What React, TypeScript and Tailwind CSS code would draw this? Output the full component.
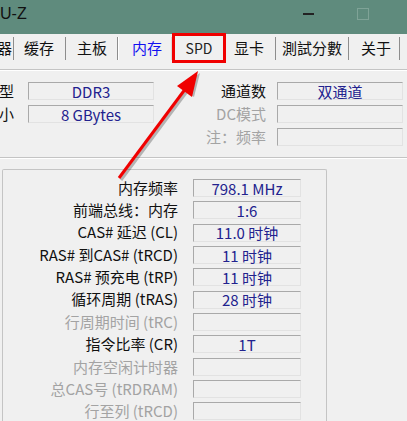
import React from "react";

type Row = { label: string; value?: string; dis?: boolean };

const rows: Row[] = [
  { label: "内存频率", value: "798.1 MHz" },
  { label: "前端总线：内存", value: "1:6" },
  { label: "CAS# 延迟 (CL)", value: "11.0 时钟" },
  { label: "RAS# 到CAS# (tRCD)", value: "11 时钟" },
  { label: "RAS# 预充电 (tRP)", value: "11 时钟" },
  { label: "循环周期 (tRAS)", value: "28 时钟" },
  { label: "行周期时间 (tRC)", dis: true },
  { label: "指令比率 (CR)", value: "1T" },
  { label: "内存空闲计时器", dis: true },
  { label: "总CAS号 (tRDRAM)", dis: true },
  { label: "行至列 (tRCD)", dis: true },
];

function Box({ value, className }: { value?: string; className: string }) {
  return (
    <div
      className={
        "h-[18px] shrink-0 flex items-center justify-center border border-t-[#a9a9a9] border-l-[#a9a9a9] border-b-[#e2e2e2] border-r-[#e2e2e2] bg-[#f0f0f0] text-[#22228e] leading-none whitespace-nowrap " +
        className
      }
    >
      {value}
    </div>
  );
}

function Tab({
  label,
  w,
  pl,
  active,
  blue,
}: {
  label: string;
  w: string;
  pl: string;
  active?: boolean;
  blue?: boolean;
}) {
  return (
    <div
      className={
        "shrink-0 flex items-center h-full whitespace-nowrap " +
        w +
        " " +
        pl +
        (active
          ? " border-l border-l-white border-r border-r-[#d8d8d8]"
          : " border-r border-r-[#8d8d8d]") +
        (blue ? " text-[#1010f0]" : " text-[#111]")
      }
    >
      {label}
    </div>
  );
}

export default function App() {
  return (
    <div className="relative w-[407px] h-[421px] overflow-hidden bg-[#f0f0f0] font-['Noto_Sans_CJK_SC','Noto_Sans',sans-serif] text-[15px] text-[#111] flex flex-col">
      {/* Title bar */}
      <div className="h-[34px] shrink-0 bg-[#5f8b7d] flex items-center">
        <div className="w-[285px] shrink-0 whitespace-nowrap text-[16px] text-[#111] -mt-[6px] font-['Liberation_Sans','Noto_Sans',sans-serif]">
          U-Z
        </div>
        <div className="shrink-0 w-[46px] h-full flex items-center justify-center -mt-[7px]">
          <div className="w-[11px] h-[2px] bg-[#222]" />
        </div>
        <div className="shrink-0 ml-[9px] w-[46px] h-full flex items-center justify-center -mt-[7px]">
          <div className="w-[12px] h-[12px] border border-[#7fa397]" />
        </div>
      </div>

      {/* Tabs */}
      <div className="h-[29px] shrink-0 flex items-stretch pt-[3px] pb-[3px]">
        <div className="shrink-0 w-[14px] h-full flex items-center justify-end pr-[1px] border-r border-r-[#8d8d8d] whitespace-nowrap overflow-visible">
          <span className="whitespace-nowrap">处理器</span>
        </div>
        <Tab label="缓存" w="w-[52px]" pl="pl-[10px]" />
        <Tab label="主板" w="w-[52px]" pl="pl-[11px]" />
        <Tab label="内存" w="w-[54px]" pl="pl-[13px]" active blue />
        <div className="shrink-0 w-[54px] h-full flex items-center justify-center pl-[1px] text-[14px] text-[#222] border-r border-r-[#8d8d8d]">
          SPD
        </div>
        <Tab label="显卡" w="w-[50px]" pl="pl-[8px]" />
        <Tab label="測試分數" w="w-[73px]" pl="pl-[6px]" />
        <Tab label="关于" w="w-[51px]" pl="pl-[12px]" />
      </div>

      {/* top line of page */}
      <div className="h-[6px] shrink-0" />
      <div className="h-[1px] shrink-0 bg-[#c4c4c4]" />
      <div className="h-[1px] shrink-0 bg-white" />

      {/* Group 1 */}
      <div className="h-[86px] shrink-0 pt-[11px] flex">
        <div className="shrink-0 flex flex-col gap-[5px]">
          <div className="flex items-center h-[18px]">
            <div className="w-[14px] shrink-0 flex justify-end whitespace-nowrap">
              <span>类型</span>
            </div>
            <Box value="DDR3" className="ml-[14px] w-[126px]" />
          </div>
          <div className="flex items-center h-[18px]">
            <div className="w-[14px] shrink-0 flex justify-end whitespace-nowrap">
              <span>大小</span>
            </div>
            <Box value="8 GBytes" className="ml-[14px] w-[126px]" />
          </div>
        </div>
        <div className="shrink-0 ml-[39px] flex flex-col gap-[5px]">
          <div className="flex items-center h-[18px]">
            <div className="w-[73px] shrink-0 text-right whitespace-nowrap">通道数</div>
            <Box value="双通道" className="ml-[11px] w-[126px]" />
          </div>
          <div className="flex items-center h-[18px]">
            <div className="w-[73px] shrink-0 text-right whitespace-nowrap text-[#a3a3a3]">DC模式</div>
            <Box className="ml-[11px] w-[126px]" />
          </div>
          <div className="flex items-center h-[18px]">
            <div className="w-[73px] shrink-0 text-right whitespace-nowrap text-[#a3a3a3]">注：频率</div>
            <Box className="ml-[11px] w-[126px]" />
          </div>
        </div>
      </div>
      <div className="h-[1px] shrink-0 bg-[#c4c4c4]" />
      <div className="h-[1px] shrink-0 bg-white" />
      <div className="h-[10px] shrink-0" />

      {/* Group 2 */}
      <div className="ml-[2px] w-[325px] flex-1 border-t border-l border-r border-[#c4c4c4] rounded-tl-[2px] rounded-tr-[2px] pt-[9px]">
        <div className="flex flex-col">
          {rows.map((r) => (
            <div key={r.label} className="h-[22.35px] shrink-0 flex items-start">
              <div className="h-[18px] flex items-center">
                <div
                  className={
                    "w-[175px] shrink-0 text-right whitespace-nowrap " +
                    (r.dis ? "text-[#a3a3a3]" : "text-[#111]")
                  }
                >
                  {r.label}
                </div>
                <Box value={r.value} className="ml-[15px] w-[108px]" />
              </div>
            </div>
          ))}
        </div>
      </div>

      {/* Annotation: red box around SPD */}
      <div className="absolute left-[172px] top-[33px] w-[54px] h-[30px] border-[3px] border-[#f00000] pointer-events-none" />

      {/* Annotation: red arrow */}
      <svg
        className="absolute left-0 top-0 pointer-events-none"
        width="407"
        height="421"
        viewBox="0 0 407 421"
      >
        <g opacity="0.25" transform="translate(2,2)">
          <line x1="119" y1="178" x2="186" y2="88" stroke="#000" strokeWidth="3" />
          <polygon points="198,71 178,85 192,95" fill="#000" />
        </g>
        <line x1="119" y1="178" x2="186" y2="88" stroke="#f00000" strokeWidth="3" />
        <polygon points="198,71 177,86 192,97" fill="#f00000" />
      </svg>
    </div>
  );
}
